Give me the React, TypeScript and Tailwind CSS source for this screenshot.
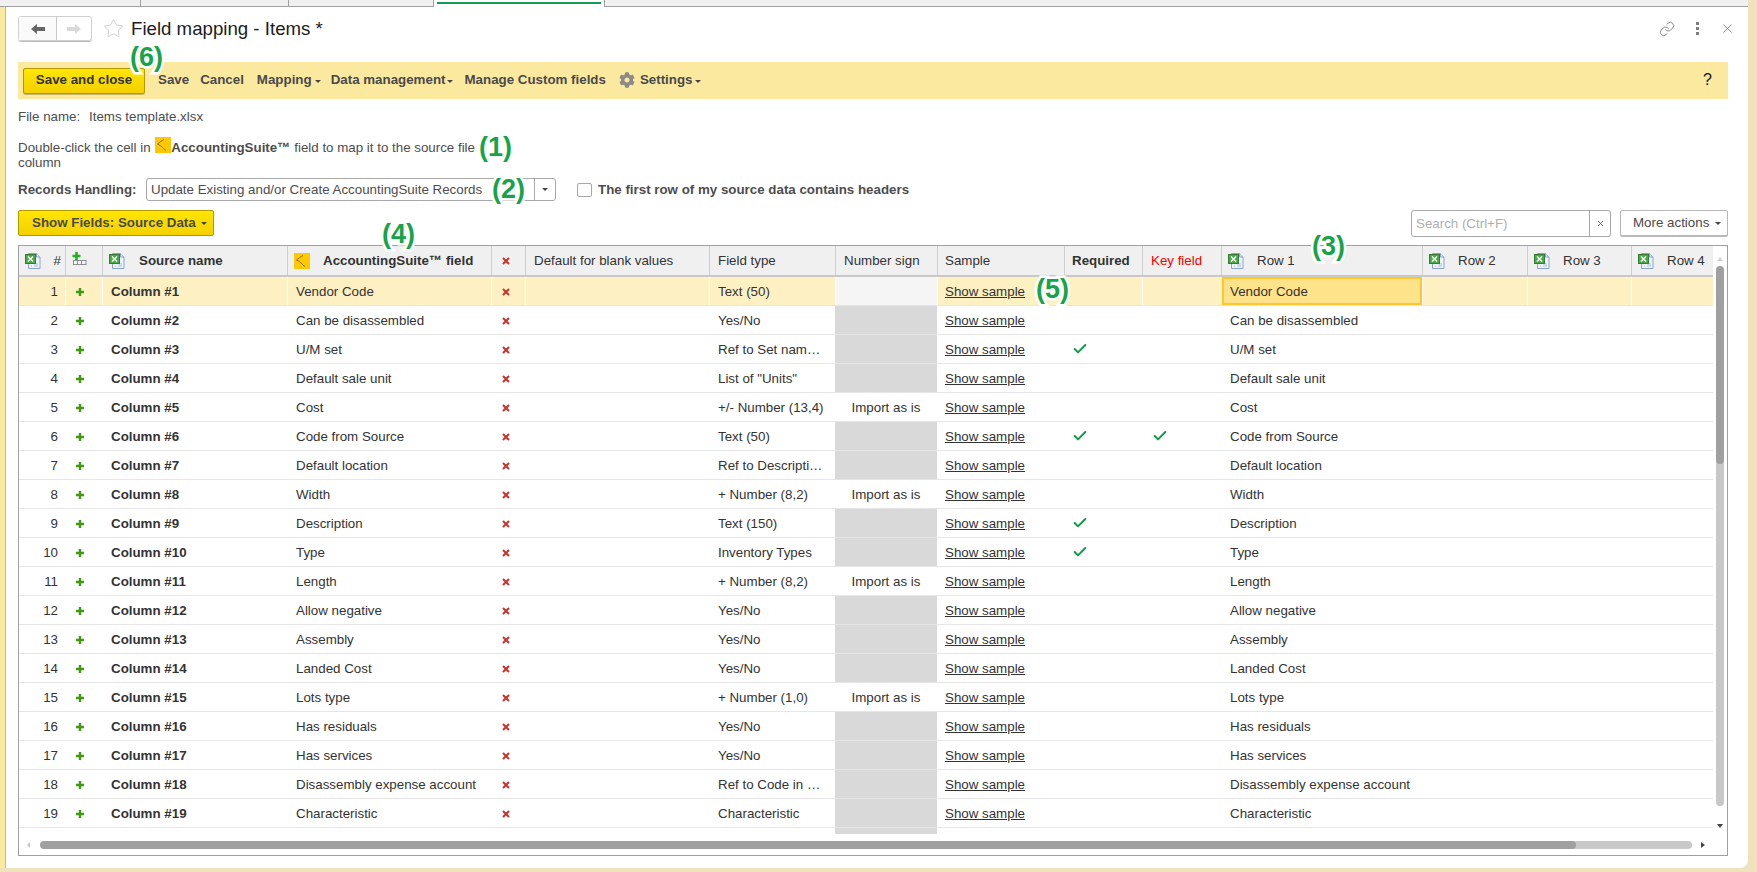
import { Check, Link, Star, X } from "lucide-react";
import { FaCog } from "react-icons/fa";

const cols = "grid grid-cols-[46px_37px_185px_204px_34px_184px_126px_102px_127px_78px_79px_201px_105px_104px_82px]";

const rows = [
  { field: "Vendor Code", type: "Text (50)" },
  { field: "Can be disassembled", type: "Yes/No" },
  { field: "U/M set", type: "Ref to Set nam…", req: true },
  { field: "Default sale unit", type: 'List of "Units"' },
  { field: "Cost", type: "+/- Number (13,4)", sign: true },
  { field: "Code from Source", type: "Text (50)", req: true, key: true },
  { field: "Default location", type: "Ref to Descripti…" },
  { field: "Width", type: "+ Number (8,2)", sign: true },
  { field: "Description", type: "Text (150)", req: true },
  { field: "Type", type: "Inventory Types", req: true },
  { field: "Length", type: "+ Number (8,2)", sign: true },
  { field: "Allow negative", type: "Yes/No" },
  { field: "Assembly", type: "Yes/No" },
  { field: "Landed Cost", type: "Yes/No" },
  { field: "Lots type", type: "+ Number (1,0)", sign: true },
  { field: "Has residuals", type: "Yes/No" },
  { field: "Has services", type: "Yes/No" },
  { field: "Disassembly expense account", type: "Ref to Code in …" },
  { field: "Characteristic", type: "Characteristic" },
];

function Caret({ color = "border-t-[#444]" }: { color?: string }) {
  return <span className={`inline-block w-0 h-0 border-x-[3px] border-t-[3px] border-x-transparent ${color}`} />;
}

function ExcelIcon() {
  return (
    <svg width="16" height="18" viewBox="0 0 16 18" className="shrink-0">
      <path d="M3.5 1.5h8l3.5 3.5v11.5h-11.5z" fill="#eef3fb" stroke="#8aa4cf" />
      <path d="M11.5 1.5v3.5h3.5" fill="#d5e1f3" stroke="#8aa4cf" />
      <path d="M9 12h4M9 14h4M6 14h1" stroke="#a9bfe0" />
      <rect x="0.5" y="2.5" width="10" height="9" fill="#4aa847" stroke="#3a7a38" />
      <path d="M3 4.5l5 5M8 4.5l-5 5" stroke="#fff" strokeWidth="1.4" />
    </svg>
  );
}

function SuiteIcon() {
  return (
    <svg width="16" height="16" viewBox="0 0 16 16" className="shrink-0">
      <rect width="16" height="16" fill="#ffc800" />
      <path d="M9 2.5C7 3.5 4.5 5.5 2.5 7c2 1 4.5 2.5 6 4.5l2.5 2" fill="none" stroke="#8a6d10" strokeWidth="1" />
    </svg>
  );
}

function PlusIcon() {
  return (
    <svg width="10" height="10" viewBox="0 0 10 10">
      <path d="M5 1v8M1 5h8" stroke="#3f9a10" strokeWidth="2.4" />
    </svg>
  );
}

function CrossIcon() {
  return (
    <svg width="8" height="8" viewBox="0 0 8 8">
      <path d="M1 1l6 6M7 1l-6 6" stroke="#c8322a" strokeWidth="2" />
    </svg>
  );
}

function AddColumnIcon() {
  return (
    <svg width="15" height="14" viewBox="0 0 15 14">
      <rect x="1.5" y="8.5" width="12.5" height="4" fill="#f4f4f4" stroke="#8a8f96" />
      <path d="M5.5 8.5v4M9.5 8.5v4" stroke="#8a8f96" />
      <path d="M4.5 0v8M0.5 4h8" stroke="#19b51a" strokeWidth="2.6" />
    </svg>
  );
}

function Note({ text, className }: { text: string; className: string }) {
  return (
    <div
      className={`absolute font-bold text-[27px] leading-[28px] text-[#17a34a] [-webkit-text-stroke:5px_white] [paint-order:stroke_fill] ${className}`}
    >
      {text}
    </div>
  );
}

function HeadCell({ children, className = "" }: { children?: React.ReactNode; className?: string }) {
  return <div className={`flex items-center shadow-[inset_1px_0_0_#cfcfcf] ${className}`}>{children}</div>;
}

function Row({ n, row }: { n: number; row: (typeof rows)[number] }) {
  const active = n === 1;
  const cell = `flex items-center min-w-0 whitespace-nowrap pt-[2px] ${active ? "shadow-[inset_1px_0_0_#fff]" : ""}`;
  return (
    <div className={`${cols} h-[29px] border-b border-[#e6e6e6] ${active ? "bg-[#fdf0c2]" : ""}`}>
      <div className="flex items-center justify-end pr-[7px] pt-[2px]">{n}</div>
      <div className={`${cell} justify-center pr-[7px]`}>
        <PlusIcon />
      </div>
      <div className={`${cell} pl-[9px] font-bold`}>Column #{n}</div>
      <div className={`${cell} pl-[9px]`}>{row.field}</div>
      <div className={`${cell} justify-center pr-[5px]`}>
        <CrossIcon />
      </div>
      <div className={cell} />
      <div className={`${cell} pl-[9px]`}>{row.type}</div>
      <div className={`${cell} justify-center ${row.sign ? "" : active ? "bg-[#f5f5f5]" : "bg-[#d9d9d9]"}`}>
        {row.sign && "Import as is"}
      </div>
      <div className={`${cell} pl-[8px]`}>
        <span className="underline">Show sample</span>
      </div>
      <div className={`${cell} pl-[8px]`}>
        {row.req && <Check size={16} strokeWidth={3} className="-mt-[2px] text-[#12994a]" />}
      </div>
      <div className={`${cell} pl-[10px]`}>
        {row.key && <Check size={16} strokeWidth={3} className="-mt-[2px] text-[#12994a]" />}
      </div>
      {active ? (
        <div className="flex items-center ml-[1px] pl-[6px] pt-[1px] bg-[#ffe38a] border-2 border-[#ffc72c]">{row.field}</div>
      ) : (
        <div className="flex items-center pl-[9px] pt-[2px] whitespace-nowrap">{row.field}</div>
      )}
      <div className={cell} />
      <div className={cell} />
      <div className={cell} />
    </div>
  );
}

export default function App() {
  return (
    <div className="relative flex w-[1757px] h-[872px] overflow-hidden bg-[#f0e2bc] font-['Liberation_Sans',Arial,sans-serif] text-[13.33px] text-[#333]">
      <div className="flex flex-col w-[1748px]">
        {/* tabs */}
        <div className="flex h-[7px] shrink-0 bg-[#f0f0f0] border-b border-[#a0a0a0]">
          <div className="w-[141px] border-r border-[#a0a0a0]" />
          <div className="w-[148px] border-r border-[#a0a0a0]" />
          <div className="w-[145px] border-r border-[#a0a0a0]" />
          <div className="w-[171px] h-[7px] pt-[2px] px-[3px] bg-white border-r border-[#a0a0a0]">
            <div className="h-[2px] bg-[#0f9d58]" />
          </div>
        </div>

        <div className="flex flex-1 min-h-0">
          <div className="w-[6px] shrink-0 bg-[#fce9a0] border-r border-[#cdbb7c]" />

          <div className="flex-1 flex flex-col bg-white rounded-br-[8px] pl-[12px] pr-[20px]">
            {/* title */}
            <div className="flex items-center mt-[9px] h-[25px] shrink-0">
              <div className="flex w-[74px] h-[25px] border border-[#d0d0d0] rounded-[3px] shadow-[0_1px_0_#bbb]">
                <div className="flex items-center justify-center w-[38px] border-r border-[#c8c8c8] bg-[#fafafa]">
                  <svg width="14" height="10" viewBox="0 0 14 10">
                    <path d="M0 5l6-5v3h8v4H6v3z" fill="#666" />
                  </svg>
                </div>
                <div className="flex flex-1 items-center justify-center">
                  <svg width="14" height="10" viewBox="0 0 14 10">
                    <path d="M14 5L8 0v3H0v4h8v3z" fill="#d8d8d8" />
                  </svg>
                </div>
              </div>
              <Star size={21} strokeWidth={1.2} className="ml-[11px] text-[#d8d8d8]" />
              <h1 className="ml-[7px] text-[18.67px] leading-[24px] text-[#1c1c1c]">Field mapping - Items *</h1>
              <div className="ml-auto -mr-[7px] flex items-center gap-[15px] text-[#707070]">
                <Link size={16} strokeWidth={1.25} />
                <div className="flex flex-col gap-[2px] w-[15px] items-center">
                  <span className="w-[3px] h-[3px] bg-[#808080]" />
                  <span className="w-[3px] h-[3px] bg-[#808080]" />
                  <span className="w-[3px] h-[3px] bg-[#808080]" />
                </div>
                <X size={15} strokeWidth={1.25} />
              </div>
            </div>

            {/* toolbar */}
            <div className="flex items-center shrink-0 mt-[21px] h-[37px] pl-[5px] pr-[16px] bg-[#fce9a0] font-bold text-[#4a4a4a]">
              <button className="w-[122px] h-[26px] pb-[2px] rounded-[2px] border border-[#b49800] bg-gradient-to-b from-[#ffe600] to-[#f4d000] text-[#333] font-bold shadow-[0_1px_0_#c9b870]">
                Save and close
              </button>
              <div className="flex flex-1 items-center pb-[2px]">
                <span className="ml-[13px]">Save</span>
                <span className="ml-[11px]">Cancel</span>
                <span className="ml-[13px]">Mapping</span>
                <span className="ml-[3px] mt-[3px] flex">
                  <Caret />
                </span>
                <span className="ml-[10px]">Data management</span>
                <span className="ml-[2px] mt-[3px] flex">
                  <Caret />
                </span>
                <span className="ml-[11px]">Manage Custom fields</span>
                <FaCog size={16} className="ml-[13px] text-[#8a8a8a]" />
                <span className="ml-[5px]">Settings</span>
                <span className="ml-[2px] mt-[3px] flex">
                  <Caret />
                </span>
                <span className="ml-auto text-[16px] font-normal text-[#111]">?</span>
              </div>
            </div>

            {/* file */}
            <div className="flex mt-[10px] h-[15px] shrink-0 leading-[15px] text-[#4d4d4d]">
              <span className="w-[71px]">File name:</span>
              <span>Items template.xlsx</span>
            </div>

            <div className="mt-[13px] h-[32px] w-[462px] shrink-0 leading-[15px] text-[#4d4d4d]">
              Double-click the cell in{" "}
              <span className="inline-block align-[-1px] ml-[1px]">
                <SuiteIcon />
              </span>
              <b>AccountingSuite™</b> field to map it to the source file column
            </div>

            {/* records handling */}
            <div className="flex items-center mt-[9px] h-[23px] shrink-0 text-[#4d4d4d]">
              <span className="w-[128px] font-bold">Records Handling:</span>
              <div className="flex w-[410px] h-[23px] border border-[#a8a8a8] rounded-[3px]">
                <div className="flex-1 flex items-center pl-[4px]">Update Existing and/or Create AccountingSuite Records</div>
                <div className="flex items-center justify-center w-[21px] border-l border-[#a8a8a8]">
                  <Caret />
                </div>
              </div>
              <span className="ml-[21px] w-[15px] h-[14px] border border-[#a8a8a8] rounded-[2px]" />
              <span className="ml-[6px] font-bold">The first row of my source data contains headers</span>
            </div>

            {/* actions */}
            <div className="flex mt-[9px] h-[27px] shrink-0">
              <button className="flex items-center w-[196px] h-[26px] pl-[13px] rounded-[2px] border border-[#b49800] bg-gradient-to-b from-[#ffe600] to-[#f4d000] font-bold text-[#4a4a4a]">
                Show Fields: Source Data
                <span className="ml-[5px] flex">
                  <Caret />
                </span>
              </button>
              <div className="ml-auto flex w-[200px] h-[27px] border border-[#a8a8a8] rounded-[3px]">
                <div className="flex-1 flex items-center pl-[4px] text-[#b0b0b0]">Search (Ctrl+F)</div>
                <div className="flex items-center justify-center w-[21px] border-l border-[#a8a8a8] text-[#555]">
                  <X size={9} strokeWidth={2.2} />
                </div>
              </div>
              <button className="ml-[9px] flex items-center w-[108px] h-[26px] pl-[12px] bg-white rounded-[2px] border border-[#b8b8b8] shadow-[0_1px_0_#bbb] text-[#4a4a4a]">
                More actions
                <span className="ml-[6px] flex">
                  <Caret />
                </span>
              </button>
            </div>

            {/* table */}
            <div className="flex flex-col mt-[8px] h-[611px] shrink-0 border border-[#a0a0a0]">
              <div className="flex flex-1 min-h-0">
                <div className="w-[1694px] shrink-0">
                  <div className={`${cols} h-[31px] bg-[#f0f0f0] border-b-2 border-[#c8c8c8]`}>
                    <div className="flex items-center justify-between pl-[6px] pr-[4px]">
                      <ExcelIcon />
                      <span>#</span>
                    </div>
                    <HeadCell className="pl-[7px] pb-[4px]">
                      <AddColumnIcon />
                    </HeadCell>
                    <HeadCell className="pl-[7px] font-bold">
                      <ExcelIcon />
                      <span className="ml-[14px]">Source name</span>
                    </HeadCell>
                    <HeadCell className="pl-[7px] font-bold">
                      <SuiteIcon />
                      <span className="ml-[13px]">AccountingSuite™ field</span>
                    </HeadCell>
                    <HeadCell className="justify-center pr-[5px]">
                      <CrossIcon />
                    </HeadCell>
                    <HeadCell className="pl-[9px]">Default for blank values</HeadCell>
                    <HeadCell className="pl-[9px]">Field type</HeadCell>
                    <HeadCell className="pl-[9px]">Number sign</HeadCell>
                    <HeadCell className="pl-[8px]">Sample</HeadCell>
                    <HeadCell className="pl-[8px] font-bold">Required</HeadCell>
                    <HeadCell className="pl-[9px] text-[#f00000]">Key field</HeadCell>
                    {["Row 1", "Row 2", "Row 3", "Row 4"].map((name) => (
                      <HeadCell key={name} className="pl-[7px]">
                        <ExcelIcon />
                        <span className="ml-[13px]">{name}</span>
                      </HeadCell>
                    ))}
                  </div>
                  <div className="h-[557px] overflow-hidden">
                    {rows.map((row, i) => (
                      <Row key={i} n={i + 1} row={row} />
                    ))}
                    <div className={`${cols} h-[29px]`}>
                      <div className="col-start-8 bg-[#d9d9d9]" />
                    </div>
                  </div>
                </div>
                {/* vertical scroll */}
                <div className="flex flex-1 flex-col items-center pl-[2px] pr-[3px] pt-[8px]">
                  <Caret color="border-t-transparent border-b-[4px] border-b-[#d0d0d0]" />
                  <div className="mt-[5px] w-[8px] h-[546px] rounded-[4px] bg-[#c8c8c8] overflow-hidden">
                    <div className="h-[198px] bg-[#a0a0a0] rounded-[4px]" />
                  </div>
                  <div className="mt-[8px]">
                    <Caret color="border-t-[4px] border-t-[#444]" />
                  </div>
                </div>
              </div>
              {/* horizontal scroll */}
              <div className="flex items-center h-[21px] shrink-0 pl-[8px]">
                <span className="w-0 h-0 border-y-[3px] border-r-[3px] border-y-transparent border-r-[#c8c8c8]" />
                <div className="ml-[10px] w-[1652px] h-[8px] rounded-[4px] bg-[#c8c8c8] overflow-hidden">
                  <div className="w-[1536px] h-[8px] rounded-[4px] bg-[#a0a0a0]" />
                </div>
                <span className="ml-[9px] w-0 h-0 border-y-[3px] border-l-[4px] border-y-transparent border-l-[#444]" />
              </div>
            </div>
          </div>
        </div>

        <div className="h-[4px] shrink-0 bg-[#f0e2bc]" />
      </div>
      <div className="w-[9px] shrink-0 bg-[#f0e2bc]" />

      {/* callouts */}
      <Note text="(6)" className="left-[130px] top-[43px]" />
      <Note text="(1)" className="left-[479px] top-[133px]" />
      <Note text="(2)" className="left-[492px] top-[175px]" />
      <Note text="(4)" className="left-[382px] top-[220px]" />
      <Note text="(3)" className="left-[1312px] top-[232px]" />
      <Note text="(5)" className="left-[1036px] top-[275px]" />
    </div>
  );
}
